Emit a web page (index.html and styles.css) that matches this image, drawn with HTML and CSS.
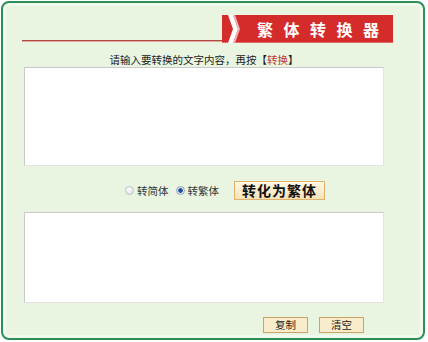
FILE: index.html
```html
<!DOCTYPE html>
<html lang="zh-CN">
<head>
<meta charset="utf-8">
<title>繁体转换器</title>
<link rel="stylesheet" href="styles.css">
</head>
<body>
<div class="frame">
  <div class="header">
    <div class="rule"></div>
    <div class="banner">
      <svg class="chev" width="18" height="28" viewBox="0 0 18 28">
        <polygon points="5,0 10,0 15,14 10,28 5,28 10,14" fill="#ffffff"/>
        <polygon points="10,0 12,0 17,14 12,28 10,28 15,14" fill="#f2b6b6"/>
      </svg>
      <span class="title">繁体转换器</span>
    </div>
  </div>
  <div class="content">
    <p class="hint">请输入要转换的文字内容，再按【<span class="hl">转换</span>】</p>
    <textarea class="box box-in"></textarea>
    <div class="controls">
      <label class="opt"><span class="radio"></span>转简体</label>
      <label class="opt"><span class="radio on"></span>转繁体</label>
      <button class="convert">转化为繁体</button>
    </div>
    <textarea class="box box-out"></textarea>
    <div class="actions">
      <button class="small">复制</button>
      <button class="small">清空</button>
    </div>
  </div>
</div>
</body>
</html>
```
FILE: styles.css
```css
html, body {
  margin: 0;
  padding: 0;
  background: #ffffff;
}
body {
  font-family: "Noto Sans CJK SC", "Noto Sans", sans-serif;
  color: #222;
}
.frame {
  margin: 1px 0 0 1px;
  width: 420px;
  height: 335px;
  border: 2px solid #2d8f58;
  border-radius: 8px;
  background: #e9f5e1;
  box-shadow: inset 0 0 0 3px #f1faec;
}
.header {
  display: flex;
  align-items: flex-end;
  margin-top: 12px;
  padding-left: 19px;
  width: 371px;
  height: 28px;
}
.rule {
  flex: 1;
  height: 1px;
  background: #b4473f;
  border-bottom: 1px solid #d9aaa0;
  margin-bottom: 1px;
}
.banner {
  width: 171px;
  height: 28px;
  background: #d42b2b;
  display: flex;
  align-items: center;
  box-shadow: inset 0 -1px 0 #e26a6a;
}
.chev {
  display: block;
  margin-left: 1px;
  flex: none;
}
.title {
  margin-left: 16px;
  color: #ffffff;
  font-size: 16px;
  font-weight: bold;
  letter-spacing: 10.5px;
  line-height: 28px;
}
.content {
  padding-left: 21px;
  width: 360px;
}
.hint {
  margin: 10px 0 1px 0;
  font-size: 10.5px;
  line-height: 13px;
  text-align: center;
  color: #1a1a1a;
}
.hl {
  color: #c0392b;
}
.box {
  display: block;
  box-sizing: border-box;
  width: 360px;
  margin: 0;
  padding: 2px;
  background: #ffffff;
  border: 1px solid #c9c9c9;
  border-right-color: #e4e4e4;
  border-bottom-color: #e4e4e4;
  resize: none;
  outline: none;
}
.box-in {
  height: 99px;
}
.box-out {
  height: 91px;
}
.controls {
  display: flex;
  align-items: center;
  margin-top: 15px;
  margin-bottom: 12px;
  padding-left: 101px;
  height: 19px;
}
.opt {
  display: flex;
  align-items: center;
  font-size: 10.5px;
  color: #333;
  margin-right: 7px;
}
.radio {
  width: 7px;
  height: 7px;
  border-radius: 50%;
  border: 1px solid #b8c4cc;
  background: radial-gradient(circle at 40% 35%, #ffffff, #d6dde2);
  margin-right: 3px;
}
.radio.on {
  border-color: #8ea6bd;
  background: radial-gradient(circle, #1f4f9a 0 2px, #dfe8f0 2.5px);
}
.convert {
  margin-left: 8px;
  width: 91px;
  height: 19px;
  padding: 0;
  border: 1px solid #e2b26c;
  background: linear-gradient(#fff8e6, #f6e3b8);
  font-family: "Noto Sans CJK SC", sans-serif;
  font-size: 14px;
  font-weight: bold;
  line-height: 17px;
  color: #111;
  letter-spacing: 1px;
}
.actions {
  display: flex;
  justify-content: flex-end;
  gap: 11px;
  margin-top: 14px;
  padding-right: 20px;
}
.small {
  width: 45px;
  height: 16px;
  padding: 0;
  border: 1px solid #caa466;
  background: #f9eccb;
  font-family: "Noto Sans CJK SC", sans-serif;
  font-size: 10.5px;
  line-height: 14px;
  color: #222;
}
```
